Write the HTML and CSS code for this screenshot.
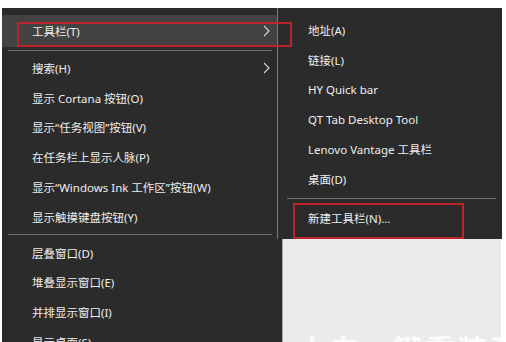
FILE: index.html
```html
<!DOCTYPE html>
<html lang="zh-CN">
<head>
<meta charset="utf-8">
<title>任务栏菜单</title>
<link rel="stylesheet" href="styles.css">
</head>
<body>
<div class="scene">
  <div class="menu">
    <div class="item hover"><span>工具栏(T)</span><svg class="chev" width="7" height="12" viewBox="0 0 7 12"><path d="M1 1 L6 6 L1 11" fill="none" stroke="#d8d8d8" stroke-width="1.1"/></svg></div>
    <div class="sep"></div>
    <div class="item"><span>搜索(H)</span><svg class="chev" width="7" height="12" viewBox="0 0 7 12"><path d="M1 1 L6 6 L1 11" fill="none" stroke="#d8d8d8" stroke-width="1.1"/></svg></div>
    <div class="item"><span>显示 Cortana 按钮(O)</span></div>
    <div class="item"><span>显示“任务视图”按钮(V)</span></div>
    <div class="item"><span>在任务栏上显示人脉(P)</span></div>
    <div class="item"><span>显示“Windows Ink 工作区”按钮(W)</span></div>
    <div class="item"><span>显示触摸键盘按钮(Y)</span></div>
    <div class="sep"></div>
    <div class="item"><span>层叠窗口(D)</span></div>
    <div class="item"><span>堆叠显示窗口(E)</span></div>
    <div class="item"><span>并排显示窗口(I)</span></div>
    <div class="item"><span>显示桌面(S)</span></div>
  </div>
  <div class="panel">
    <div class="mark">小白一键重装系统</div>
  </div>
  <div class="submenu">
    <div class="item"><span>地址(A)</span></div>
    <div class="item"><span>链接(L)</span></div>
    <div class="item"><span>HY Quick bar</span></div>
    <div class="item"><span>QT Tab Desktop Tool</span></div>
    <div class="item"><span>Lenovo Vantage 工具栏</span></div>
    <div class="item"><span>桌面(D)</span></div>
    <div class="sep sub-sep"></div>
    <div class="item"><span>新建工具栏(N)...</span></div>
  </div>
  <div class="redbox box1"></div>
  <div class="redbox box2"></div>
</div>
</body>
</html>
```

FILE: styles.css
```css
html, body {
  margin: 0;
  padding: 0;
  background: #ffffff;
  overflow: hidden;
  width: 506px;
  height: 342px;
}
.scene {
  position: relative;
  display: flex;
  align-items: flex-start;
  padding: 8px 0 0 2px;
  font-family: "Noto Sans", "Noto Sans CJK SC", sans-serif;
  font-size: 11.5px;
  color: #eeeeee;
}
.menu {
  width: 280px;
  background: #2b2b2b;
  padding-top: 7px;
  height: 360px;
  box-sizing: border-box;
}
.item {
  height: 29.8px;
  display: flex;
  align-items: center;
  justify-content: space-between;
  padding: 0 12px 0 30px;
  box-sizing: border-box;
  white-space: nowrap;
}
.item.hover {
  background: #424242;
  height: 32px;
}
.chev {
  display: block;
}
.sep {
  height: 6px;
  display: flex;
  align-items: center;
  margin: 0 10px 0 6px;
}
.sep::before {
  content: "";
  display: block;
  flex: 1;
  height: 1px;
  background: #6e6e6e;
}
.panel {
  width: 219px;
  height: 360px;
  background: #ebebeb;
  border-left: 1px solid #a8a8a8;
  box-sizing: border-box;
  padding: 318px 0 0 14px;
  overflow: hidden;
}
.mark {
  font-size: 30px;
  font-weight: bold;
  color: #fbfbfb;
  white-space: nowrap;
  letter-spacing: 2px;
}
.submenu {
  position: absolute;
  left: 277px;
  top: 8px;
  width: 225px;
  height: 231px;
  box-sizing: border-box;
  background: #2b2b2b;
  border-left: 1px solid #7a7a7a;
  padding-top: 7px;
}
.submenu .item {
  padding-left: 30px;
}
.sub-sep {
  height: 9px;
  margin: 0 6px 0 9px;
}
.redbox {
  position: absolute;
  border: 2px solid #bd232b;
  box-sizing: border-box;
}
.box1 {
  left: 17px;
  top: 22px;
  width: 275px;
  height: 25px;
}
.box2 {
  left: 293px;
  top: 203px;
  width: 171px;
  height: 36px;
}
```
